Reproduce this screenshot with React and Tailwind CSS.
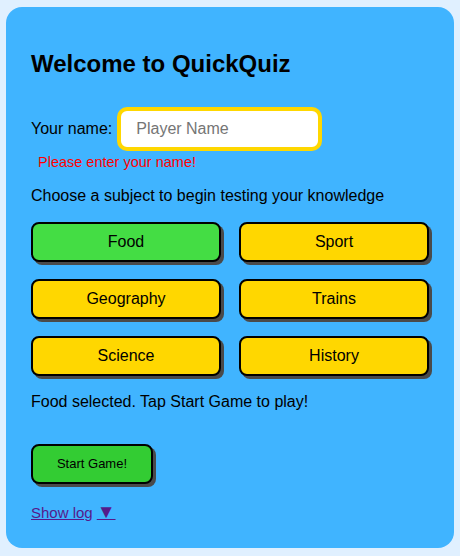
import React, { useState } from 'react';

const subjects = ['Food', 'Sport', 'Geography', 'Trains', 'Science', 'History'];

const App = () => {
  const [name, setName] = useState('');
  const [subject, setSubject] = useState('Food');

  return (
    <div className="min-h-screen bg-[#e0f0ff] pt-[7px] px-[6px] font-['Liberation_Sans',Arial,sans-serif] text-black">
      <div className="w-[448px] rounded-[16px] bg-[#40b4ff] px-[25px] pt-[43px] pb-[23px]">
        <h1 className="text-[24px] leading-[28px] font-bold">Welcome to QuickQuiz</h1>

        <div className="mt-[29px] flex items-center">
          <label className="text-[16px]">Your name:</label>
          <input
            value={name}
            onChange={e => setName(e.target.value)}
            placeholder="Player Name"
            className="ml-[5px] h-[44px] w-[205px] rounded-[10px] border-[4px] border-[#ffd700] bg-white px-[15px] text-[16px] outline-none placeholder:text-[#757575]"
          />
        </div>
        <p className="mt-[3px] ml-[7px] text-[14.5px] leading-[17px] text-[#ff0000]">Please enter your name!</p>

        <p className="mt-[16px] text-[16px] leading-[18px]">Choose a subject to begin testing your knowledge</p>

        <div className="mt-[17px] grid grid-cols-[190px_190px] gap-x-[18px] gap-y-[17px]">
          {subjects.map(s => (
            <button
              key={s}
              onClick={() => setSubject(s)}
              className={`h-[40px] rounded-[8px] border-2 border-black text-[16px] shadow-[3px_3px_0_#4a4a4a] ${subject === s ? 'bg-[#44dd44]' : 'bg-[#ffd700]'}`}
            >
              {s}
            </button>
          ))}
        </div>

        <p className="mt-[17px] text-[16px] leading-[18px]">{subject} selected. Tap Start Game to play!</p>

        <button className="mt-[33px] block h-[40px] w-[122px] rounded-[8px] border-2 border-black bg-[#33cc33] text-[13px] shadow-[3px_3px_0_#4a4a4a]">
          Start Game!
        </button>

        <a href="#" className="mt-[19px] inline-block text-[15px] leading-[17px] text-[#551a8b] underline">
          Show log<span className="ml-[4px] text-[19px] leading-[17px]">▼</span>
        </a>
      </div>
    </div>
  );
};

export default App;
